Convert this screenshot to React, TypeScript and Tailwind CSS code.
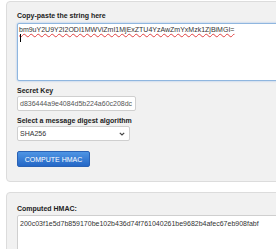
import React from "react";

export default function App() {
  return (
    <div className="w-[276px] h-[249px] bg-white overflow-hidden font-['Liberation_Sans',Arial,sans-serif] text-[7px] leading-[9px] text-[#333]">
      <div className="ml-[6px] mt-[1px] w-[300px] rounded-[4px] border border-[#dcdcdc] bg-[#f1f1f1] pl-[10px] pt-[9px] pb-[14px]">
        <div className="font-bold text-[#222]">Copy-paste the string here</div>
        <div className="mt-[3px] h-[58px] border border-[#8fb6df] bg-white rounded-[2px] pl-[1px] pt-[1px] shadow-[0_0_2px_rgba(82,150,230,0.6)] flex flex-col">
          <div className="text-[#333]">
            <span className="underline decoration-wavy decoration-[#e04040] decoration-[0.5px] underline-offset-[1px]">
              bm9uY2U9Y2I2ODI1MWViZmI1MjExZTU4YzAwZmYxMzk1ZjBiMGI=
            </span>
          </div>
          <div className="ml-[1px] mt-[0px] w-[1px] h-[8px] bg-black" />
        </div>
        <div className="mt-[5px] font-bold text-[#222]">Secret Key</div>
        <div className="mt-[1px] w-[119px] h-[15px] border border-[#cfcfcf] bg-white rounded-[2px] px-[2px] flex items-center overflow-hidden whitespace-nowrap text-[#555]">
          d836444a9e4084d5b224a60c208dc
        </div>
        <div className="mt-[5px] font-bold text-[#222]">Select a message digest algorithm</div>
        <div className="mt-[1px] w-[113px] h-[15px] border border-[#cfcfcf] bg-white rounded-[2px] pl-[2px] pr-[4px] flex items-center justify-between text-[#333]">
          <span>SHA256</span>
          <svg width="6" height="4" viewBox="0 0 6 4">
            <path d="M0.8 0.8 L3 3 L5.2 0.8" fill="none" stroke="#444" strokeWidth="1.2" />
          </svg>
        </div>
        <div className="mt-[10px] w-[73px] h-[16px] rounded-[2px] border border-[#2a62b5] bg-gradient-to-b from-[#4f95e4] to-[#2467c6] flex items-center justify-center text-white">
          COMPUTE HMAC
        </div>
      </div>
      <div className="ml-[6px] mt-[10px] w-[300px] h-[80px] rounded-[4px] border border-[#dcdcdc] bg-[#f1f1f1] pl-[10px] pt-[11px]">
        <div className="font-bold text-[#222]">Computed HMAC:</div>
        <div className="mt-[2px] h-[60px] border border-[#cfcfcf] bg-white rounded-[2px] pl-[2px] pt-[3px] whitespace-nowrap text-[#333]">
          200c03f1e5d7b859170be102b436d74f761040261be9682b4afec67eb908fabf
        </div>
      </div>
    </div>
  );
}
